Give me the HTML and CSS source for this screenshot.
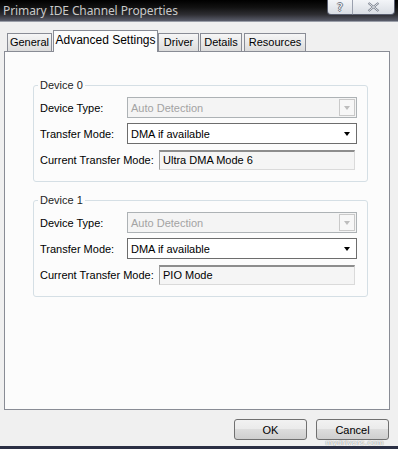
FILE: index.html
```html
<!DOCTYPE html>
<html lang="en">
<head>
  <meta charset="UTF-8">
  <title>Primary IDE Channel Properties</title>
  <link rel="stylesheet" href="styles.css">
</head>
<body>
  <div class="window">
    <!-- Title Bar -->
    <div class="titlebar">
      <span class="title">Primary IDE Channel Properties</span>
      <div class="caption-buttons">
        <span class="cap-btn help">?</span>
        <span class="cap-btn close">
          <svg width="13" height="10" viewBox="0 0 13 10">
            <path d="M1.5 1 L11.5 9 M11.5 1 L1.5 9" stroke="#6b7280" stroke-width="2.2" fill="none"/>
            <path d="M1.5 1 L11.5 9 M11.5 1 L1.5 9" stroke="#f4f6f8" stroke-width="0.9" fill="none"/>
          </svg>
        </span>
      </div>
    </div>

    <div class="client">
      <!-- Tabs -->
      <div class="tabs">
        <span class="tab tab-general">General</span>
        <span class="tab tab-advanced active">Advanced Settings</span>
        <span class="tab tab-driver">Driver</span>
        <span class="tab tab-details">Details</span>
        <span class="tab tab-resources">Resources</span>
      </div>

      <!-- Tab Panel -->
      <div class="panel">
        <fieldset class="group">
          <legend>Device 0</legend>
          <div class="row">
            <label class="label">Device Type:</label>
            <div class="combo disabled">
              <span class="combo-text">Auto Detection</span>
              <span class="combo-btn"><span class="arrow"></span></span>
            </div>
          </div>
          <div class="row">
            <label class="label">Transfer Mode:</label>
            <div class="combo">
              <span class="combo-text">DMA if available</span>
              <span class="combo-btn"><span class="arrow"></span></span>
            </div>
          </div>
          <div class="row">
            <label class="label label-wide">Current Transfer Mode:</label>
            <div class="textbox">Ultra DMA Mode 6</div>
          </div>
        </fieldset>

        <fieldset class="group">
          <legend>Device 1</legend>
          <div class="row">
            <label class="label">Device Type:</label>
            <div class="combo disabled">
              <span class="combo-text">Auto Detection</span>
              <span class="combo-btn"><span class="arrow"></span></span>
            </div>
          </div>
          <div class="row">
            <label class="label">Transfer Mode:</label>
            <div class="combo">
              <span class="combo-text">DMA if available</span>
              <span class="combo-btn"><span class="arrow"></span></span>
            </div>
          </div>
          <div class="row">
            <label class="label label-wide">Current Transfer Mode:</label>
            <div class="textbox">PIO Mode</div>
          </div>
        </fieldset>
      </div>

      <!-- Dialog Buttons -->
      <div class="actions">
        <button class="btn">OK</button>
        <button class="btn">Cancel</button>
        <span class="watermark">mydrivers.com</span>
      </div>
    </div>
  </div>
</body>
</html>
```

FILE: styles.css
```css
/* General Styles */
body {
  margin: 0;
  padding: 0;
  background: #f0f0f0;
  font-family: 'Liberation Sans', Arial, sans-serif;
  font-size: 11px;
  color: #000;
}

.window {
  width: 398px;
  height: 449px;
  display: flex;
  flex-direction: column;
  background: #f0f0f0;
  border-bottom: 3px solid #2b2f44;
  box-sizing: border-box;
  overflow: hidden;
}

/* Title Bar */
.titlebar {
  height: 22px;
  flex: none;
  display: flex;
  align-items: flex-start;
  background: linear-gradient(#000 0%, #111 35%, #2e2e33 70%, #5b5e6c 100%);
  border-bottom: 1px solid #9a9ea8;
  box-sizing: border-box;
}

.title {
  font-family: 'Noto Sans', sans-serif;
  font-size: 12px;
  line-height: 22px;
  color: #c9c9c9;
  padding-left: 3px;
  letter-spacing: -0.1px;
}

.caption-buttons {
  margin-left: auto;
  margin-right: 3px;
  display: flex;
}

.cap-btn {
  height: 15px;
  display: flex;
  align-items: center;
  justify-content: center;
  background: linear-gradient(#f3f5f8, #d9dde4);
  border: 1px solid #5a5f70;
  border-top: none;
  box-sizing: border-box;
}

.help {
  width: 25px;
  border-radius: 0 0 0 4px;
  border-right: none;
  font-family: 'DejaVu Sans', sans-serif;
  font-size: 11px;
  color: #f4f6f8;
  text-shadow: 1px 0 #6b7280, -1px 0 #6b7280, 0 1px #6b7280, 0 -1px #6b7280;
}

.close {
  width: 43px;
  border-radius: 0 0 4px 0;
  border-left: 1px solid #9aa0ae;
}

/* Client Area */
.client {
  flex: 1;
  display: flex;
  flex-direction: column;
  padding: 8px 8px 0 4px;
}

/* Tabs */
.tabs {
  display: flex;
  align-items: flex-end;
  height: 21px;
  position: relative;
  z-index: 1;
}

.tab {
  height: 18px;
  line-height: 17px;
  text-align: center;
  border: 1px solid #898c95;
  border-bottom: none;
  box-sizing: border-box;
  background: linear-gradient(#f6f6f6, #dcdcdc);
}

.tab-general { width: 45px; margin-left: 3px; }
.tab-advanced { width: 105px; margin-left: 1px; }
.tab-driver { width: 41px; }
.tab-details { width: 42px; margin-left: 1px; }
.tab-resources { width: 62px; margin-left: 2px; }

.tab.active {
  height: 22px;
  line-height: 19px;
  margin-bottom: -1px;
  background: #fcfcfc;
  font-size: 12px;
}

/* Tab Panel */
.panel {
  height: 359px;
  box-sizing: border-box;
  border: 1px solid #898c95;
  background: #fcfcfc;
  padding: 27px 21px 0 28px;
}

.group {
  margin: 0 0 12px;
  padding: 5px 10px 11px 6px;
  border: 1px solid #d5dfe5;
  border-radius: 3px;
}

.group legend {
  padding: 0 2px;
  margin-left: -2px;
  line-height: 13px;
  color: #1e1e1e;
}

.row {
  display: flex;
  align-items: center;
  height: 21px;
  margin-bottom: 5px;
}

.row:last-child {
  margin-bottom: 0;
}

.label {
  width: 87px;
  flex: none;
}

.label-wide {
  width: 119px;
}

/* Combo Boxes */
.combo {
  width: 230px;
  height: 21px;
  box-sizing: border-box;
  border: 1px solid #6d6d6d;
  background: #fff;
  display: flex;
  align-items: center;
}

.combo-text {
  flex: 1;
  padding-left: 3px;
}

.combo-btn {
  width: 16px;
  height: 17px;
  margin-right: 1px;
  display: flex;
  align-items: center;
  justify-content: center;
  box-sizing: border-box;
}

.arrow {
  width: 0;
  height: 0;
  border-left: 3.5px solid transparent;
  border-right: 3.5px solid transparent;
  border-top: 4px solid #000;
}

.combo.disabled {
  border-color: #adb2b5;
  background: #f4f4f4;
  color: #a3a3a3;
}

.combo.disabled .combo-btn {
  border: 1px solid #c9c9c9;
  background: #f7f7f7;
}

.combo.disabled .arrow {
  border-top-color: #bdbdbd;
}

/* Read-only Text Box */
.textbox {
  width: 196px;
  height: 20px;
  box-sizing: border-box;
  line-height: 17px;
  padding-left: 3px;
  background: #f5f5f5;
  border: 1px solid #dadada;
  border-top: 2px solid #8d8d8d;
  border-left-color: #a0a0a0;
}

/* Dialog Buttons */
.actions {
  display: flex;
  justify-content: flex-end;
  gap: 9px;
  padding: 9px 1px 0 0;
  position: relative;
}

.btn {
  width: 73px;
  height: 21px;
  font-family: 'Liberation Sans', Arial, sans-serif;
  font-size: 11px;
  color: #000;
  border: 1px solid #707070;
  border-radius: 3px;
  background: linear-gradient(#f2f2f2 0%, #ebebeb 45%, #dddddd 50%, #cfcfcf 100%);
  padding: 0;
}

.watermark {
  position: absolute;
  right: 6px;
  top: 29px;
  font-size: 8px;
  line-height: 8px;
  color: #fff;
  text-shadow: 0 0 1px #8a8a8a, 0 0 1px #8a8a8a;
  letter-spacing: 0.5px;
}
```
